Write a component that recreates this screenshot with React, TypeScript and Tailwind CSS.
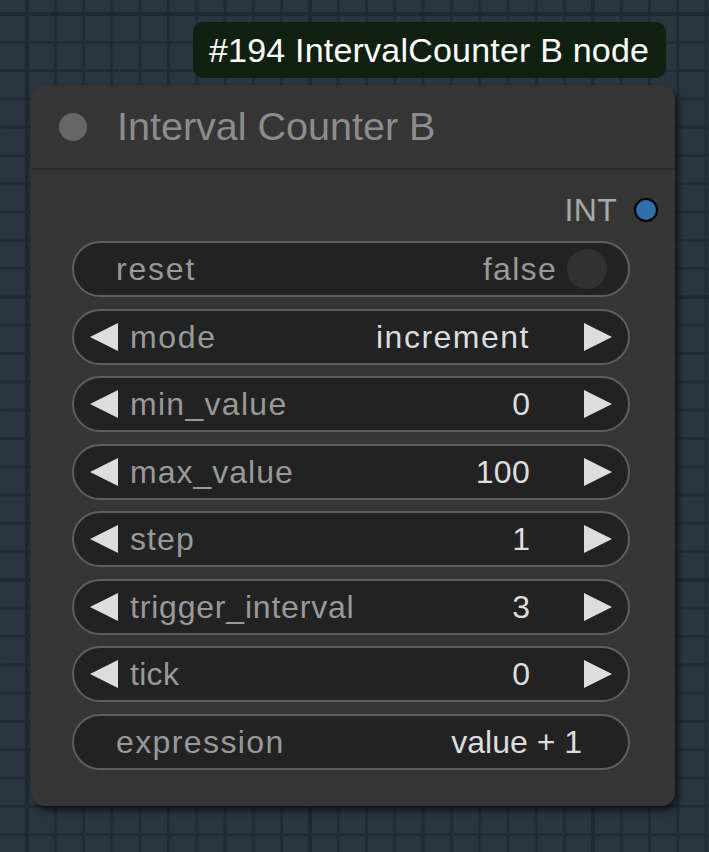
import React from "react";

const FONT = "font-['Liberation_Sans',Arial,sans-serif]";

function LeftArrow() {
  return (
    <svg width="28" height="28" viewBox="0 0 28 28" className="shrink-0">
      <polygon points="0,14 28,0 28,28" fill="#dddddd" />
    </svg>
  );
}

function RightArrow() {
  return (
    <svg width="28" height="28" viewBox="0 0 28 28" className="shrink-0">
      <polygon points="28,14 0,0 0,28" fill="#dddddd" />
    </svg>
  );
}

function NumberWidget({
  label,
  value,
  lt,
  vt,
}: {
  label: string;
  value: string;
  lt: string;
  vt: string;
}) {
  return (
    <div className="flex h-[56px] items-center rounded-full border-2 border-[#5e5e5e] bg-[#222222] pl-[16px] pr-[16px]">
      <LeftArrow />
      <span className={`ml-[12px] text-[32px] leading-none text-[#999999] ${lt}`}>{label}</span>
      <span className={`ml-auto text-[32px] leading-none text-[#dddddd] ${vt}`}>{value}</span>
      <span className="ml-[54px] flex">
        <RightArrow />
      </span>
    </div>
  );
}

export default function App() {
  const rows = [
    { label: "mode", value: "increment", lt: "tracking-[1.7px]", vt: "tracking-[1.5px]" },
    { label: "min_value", value: "0", lt: "tracking-[1.3px]", vt: "" },
    { label: "max_value", value: "100", lt: "tracking-[1px]", vt: "tracking-[0.3px]" },
    { label: "step", value: "1", lt: "tracking-[1.1px]", vt: "" },
    { label: "trigger_interval", value: "3", lt: "tracking-[0.8px]", vt: "" },
    { label: "tick", value: "0", lt: "tracking-[0.3px]", vt: "" },
  ];
  return (
    <div
      className={`relative h-[852px] w-[709px] overflow-hidden bg-[#29353f] bg-[linear-gradient(to_right,#1e2931_4px,transparent_4px),linear-gradient(to_bottom,#1e2931_4px,transparent_4px),linear-gradient(to_right,#202b34_3px,transparent_3px),linear-gradient(to_bottom,#202b34_3px,transparent_3px)] bg-[size:283px_283px,283px_283px,28.3px_28.3px,28.3px_28.3px] bg-[position:25px_12px,25px_12px,25.5px_12.5px,25.5px_12.5px] ${FONT}`}
    >
      <div className="absolute left-[193px] top-[22px] flex h-[56px] items-center rounded-[10px] bg-[#0f1f10] pl-[16px] pr-[17px] text-[34px] leading-none tracking-[0.2px] text-white">
        #194 IntervalCounter B node
      </div>

      <div className="absolute left-[31px] top-[85px] w-[644px] rounded-[14px] bg-[#353535] shadow-[3px_5px_6px_rgba(0,0,0,0.55)]">
        <div className="flex h-[85px] items-center border-b-2 border-[#2b2b2b]">
          <div className="ml-[28px] h-[28px] w-[28px] rounded-full bg-[#666666]" />
          <span className="ml-[30px] text-[39.5px] leading-none text-[#8c8c8c]">Interval Counter B</span>
        </div>

        <div className="pb-[36px] pt-[11px]">
          <div className="flex h-[58px] items-center justify-end pr-[17px]">
            <span className="text-[32px] leading-none tracking-[0.3px] text-[#a8a8a8]">INT</span>
            <div className="ml-[17px] h-[24px] w-[24px] rounded-full border-2 border-black bg-[#2f6ea8]" />
          </div>

          <div className="ml-[41px] mr-[45px] mt-[2px] flex flex-col gap-[11.5px]">
            <div className="flex h-[56px] items-center rounded-full border-2 border-[#5e5e5e] bg-[#222222] pl-[42px] pr-[21px]">
              <span className="text-[32px] leading-none tracking-[1.8px] text-[#999999]">reset</span>
              <span className="ml-auto text-[32px] leading-none tracking-[1.3px] text-[#999999]">false</span>
              <div className="ml-[10px] h-[40px] w-[40px] rounded-full bg-[#313131]" />
            </div>
            {rows.map((r) => (
              <NumberWidget key={r.label} label={r.label} value={r.value} lt={r.lt} vt={r.vt} />
            ))}
            <div className="flex h-[56px] items-center rounded-full border-2 border-[#5e5e5e] bg-[#222222] pl-[42px] pr-[46px]">
              <span className="text-[32px] leading-none tracking-[1.4px] text-[#999999]">expression</span>
              <span className="ml-auto text-[32px] leading-none text-[#dddddd]">value + 1</span>
            </div>
          </div>
        </div>
      </div>
    </div>
  );
}
